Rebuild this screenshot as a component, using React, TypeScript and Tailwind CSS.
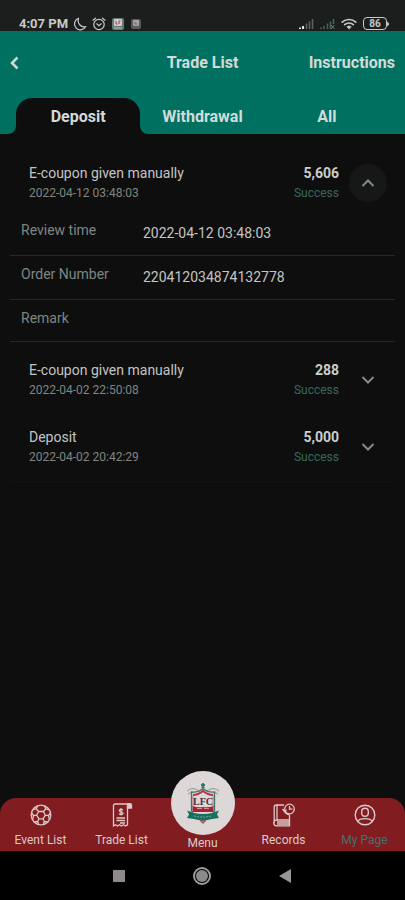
import { useState } from "react";
import type { ReactNode } from "react";

type Trade = {
  id: string;
  title: string;
  time: string;
  amount: string;
  status: string;
  details: { label: string; value: string }[];
};

const trades: Trade[] = [
  {
    id: "coupon-0412",
    title: "E-coupon given manually",
    time: "2022-04-12 03:48:03",
    amount: "5,606",
    status: "Success",
    details: [
      { label: "Review time", value: "2022-04-12 03:48:03" },
      { label: "Order Number", value: "220412034874132778" },
      { label: "Remark", value: "" },
    ],
  },
  {
    id: "coupon-0402",
    title: "E-coupon given manually",
    time: "2022-04-02 22:50:08",
    amount: "288",
    status: "Success",
    details: [],
  },
  {
    id: "deposit-0402",
    title: "Deposit",
    time: "2022-04-02 20:42:29",
    amount: "5,000",
    status: "Success",
    details: [],
  },
];

const tabs = ["Deposit", "Withdrawal", "All"];

function StatusBar() {
  return (
    <div className="flex h-[31px] items-end justify-between bg-[#1c1e1d] pr-4 pl-[19px] text-[#c8cac9]">
      <div className="flex items-center gap-1">
        <span className="mr-px text-[13px] leading-[15px] font-bold">4:07 PM</span>
        {/* do not disturb */}
        <svg width="14" height="14" viewBox="0 0 14 14" fill="none" stroke="currentColor" strokeWidth="1.2">
          <path d="M5.5 1.2A6 6 0 1 0 12.8 9.6C8 10.8 3.9 6.3 5.5 1.2Z" strokeLinejoin="round" />
        </svg>
        {/* alarm */}
        <svg className="ml-px" width="14" height="14" viewBox="0 0 14 14" fill="none" stroke="currentColor" strokeWidth="1.2" strokeLinecap="round">
          <circle cx="7" cy="7.5" r="5.2" />
          <path d="M1 3.2 3.6 1.2M13 3.2 10.4 1.2M4.8 6.8 7 8.6 9.2 6.8" />
        </svg>
        <svg className="ml-px" width="14" height="14" viewBox="0 0 14 14">
          <rect x="1" y="1" width="12" height="12" rx="2" fill="#5f7d72" />
          <rect x="3" y="2" width="8" height="7" rx="1" fill="#d9c5c8" />
          <path d="M5 4v3h1.5M8 7V4h1.5" stroke="#944a55" fill="none" />
          <path d="M3 11h8" stroke="#b4c0ba" />
        </svg>
        <svg className="ml-px" width="12" height="14" viewBox="0 0 12 14">
          <rect x="1" y="2" width="10" height="10" rx="2" fill="#555b59" />
          <rect x="3" y="3" width="6" height="6" rx="1" fill="#aaa0a3" />
          <path d="M5 5v2h2M3 11h6" stroke="#785e67" fill="none" />
        </svg>
      </div>
      <div className="flex items-center gap-[6px] pb-px">
        <svg width="15" height="12" viewBox="0 0 15 12">
          <path d="M1 11V9.500M4 11V8" stroke="#e2e2e2" strokeWidth="2" />
          <path d="M7.500 11V5.500M10.500 11V3.500M13.500 11V1" stroke="#5e6361" strokeWidth="1.500" />
        </svg>
        <svg width="15" height="12" viewBox="0 0 15 12">
          <path d="M1 11V9.500M4 11V8M7.500 11V5.500M10.500 11V3.500M13.500 6V1" stroke="#46665d" strokeWidth="1.500" />
          <path d="m11 7 3.500 4M14.500 7 11 11" stroke="#5d7e75" />
        </svg>
        <svg width="16" height="12" viewBox="0 0 16 12" fill="none" stroke="currentColor" strokeWidth="1.6" strokeLinecap="round">
          <path d="M1.200 4.200a10 10 0 0 1 13.600 0M3.600 6.700a6.500 6.500 0 0 1 8.800 0" />
          <path d="M8 11 5.800 8.800a3.200 3.200 0 0 1 4.400 0Z" fill="currentColor" strokeWidth="0.5" />
        </svg>
        <div className="flex items-center">
          <span className="flex h-[13px] w-6 items-center justify-center rounded border border-[#c8cac9] text-[10px] leading-none font-bold">
            86
          </span>
          <span className="h-1 w-0.5 rounded-r bg-[#c8cac9]" />
        </div>
      </div>
    </div>
  );
}

// Curved foot that joins the active tab to the page below it
function TabFoot({ className }: { className: string }) {
  return (
    <svg className={`absolute bottom-0 ${className}`} width="8" height="8" viewBox="0 0 8 8" fill="#0e0e0e">
      <path d="M8 0v8H0a8 8 0 0 0 8-8Z" />
    </svg>
  );
}

type TradeRowProps = {
  trade: Trade;
  isExpanded: boolean;
  onToggle: () => void;
};

function TradeRow({ trade, isExpanded, onToggle }: TradeRowProps) {
  return (
    <li>
      <div className="flex h-[67px] items-center pr-2 pl-[19px]">
        <div className="min-w-0 flex-1">
          <h2 className="text-[14px] leading-5 text-[#c3c5c4]">{trade.title}</h2>
          <p className="text-[12px] leading-5 text-[#7e8683]">{trade.time}</p>
        </div>
        <div className="text-right">
          <p className="text-[14px] leading-5 font-bold text-[#cbcdcc]">{trade.amount}</p>
          <p className="text-[12px] leading-5 text-[#39695b]">{trade.status}</p>
        </div>
        <button
          type="button"
          onClick={onToggle}
          aria-label={isExpanded ? "Hide details" : "Show details"}
          aria-expanded={isExpanded}
          className={`ml-[10px] flex size-[38px] items-center justify-center rounded-full text-[#858988] ${isExpanded ? "bg-[#161817]" : ""}`}
        >
          <svg width="14" height="10" viewBox="0 0 14 10" fill="none" stroke="currentColor" strokeWidth="2">
            <path d={isExpanded ? "M1.5 8 7 2.5 12.5 8" : "M1.5 2 7 7.5 12.5 2"} />
          </svg>
        </button>
      </div>
      {isExpanded && trade.details.length > 0 && (
        <dl className="-mt-1 mb-1 text-[14px] leading-5">
          {trade.details.map((detail) => (
            <div key={detail.label} className="flex h-[44px] border-b border-[#242726] pl-[11px] last:h-[42px]">
              <dt className="w-[122px] flex-none pt-2 text-[#7e8683]">{detail.label}</dt>
              <dd className="pt-[11px] text-[#c3c5c4]">{detail.value}</dd>
            </div>
          ))}
        </dl>
      )}
    </li>
  );
}

function BallIcon() {
  return (
    <svg width="22" height="22" viewBox="0 0 22 22" fill="none" stroke="currentColor" strokeWidth="1.3" strokeLinejoin="round">
      <circle cx="11" cy="11" r="9.8" />
      <path d="M8.600 7.500h4.800l2 3.700-2.400 3.600H9l-2.400-3.600ZM8.600 7.500 6.300 4.800 7.500 1.900M13.400 7.500l2.300-2.700-1.200-2.900M6.600 11.200l-3.100.3-2-2.500M15.400 11.200l3.100.3 2-2.500M9 14.800l-1.300 2.700 1 3M13 14.800l1.300 2.700-1 3M6.300 4.800 3 5.500M15.700 4.800l3.300.7M3.500 11.500l-.8 4.500M18.500 11.500l.8 4.500M7.700 17.500l-3.500.5M14.300 17.500l3.500.5" />
    </svg>
  );
}

function ReceiptIcon() {
  return (
    <svg width="22" height="24" viewBox="0 0 22 24" fill="none" stroke="currentColor" strokeWidth="1.3">
      <path d="M17 1H4Q2.500 1 2.500 2.500V23l2-1.200 2 1.200 2-1.200 2 1.200 2-1.200 2 1.200 2-1.200V3" />
      <path d="M16.500 5V2.500a2 2 0 0 1 4 0V5Z" fill="currentColor" />
      <path d="M12 7.200c-.5-1-3.800-1.200-3.800.5 0 1.600 3.800.8 3.800 2.600 0 1.700-3.500 1.500-4 .3M10 5v7.500M5.500 15h8.500M5.500 17.500h8.500M9 20h5" />
    </svg>
  );
}

function RecordsIcon() {
  return (
    <svg width="22" height="24" viewBox="0 0 22 24" fill="none" stroke="currentColor" strokeWidth="1.3">
      <path d="M11 2H3.500Q1.200 2 1.200 4v16M4 2v15M16.500 12v5H3.700a2.900 2.900 0 0 0 0 5.800h12.800V17M4 19h12.500M4 21h12.500" />
      <circle cx="16.5" cy="6" r="4.8" />
      <path d="M16.500 3v3.200h3M9.500 6l2 2.500 2-1.500M11.500 8.500q1.500 3 5 3" />
    </svg>
  );
}

function PersonIcon() {
  return (
    <svg width="22" height="22" viewBox="0 0 22 22" fill="none" stroke="currentColor" strokeWidth="1.4">
      <circle cx="11" cy="11" r="9.8" />
      <rect x="7.7" y="4.2" width="6.6" height="8" rx="3.3" />
      <path d="M4 17.500c1.500-3.800 12.500-3.800 14 0" />
    </svg>
  );
}

function ClubCrest() {
  return (
    <svg width="36" height="44" viewBox="0 0 36 44" fill="none">
      <path d="M18 2v4M16 4h4M16.500 6.500h3" stroke="#327b6b" strokeWidth="1.8" />
      <path d="M2 10q5-4 9-1.500Q15 11 18 7q3 4 7 1.500Q29 6 34 10M3 13l4-2M33 13l-4-2" stroke="#8d9593" />
      <path d="M6.500 11q6 1 11.500-3 5.500 4 11.500 3v19q-3 6-11.500 10Q9.500 36 6.500 30Z" fill="#ded6d7" stroke="#3e756a" strokeWidth="1.3" />
      <path d="M8 14q5 0 10-4 5 4 10 4" stroke="#b23a48" strokeWidth="2.2" />
      <path d="M8 14.500v11M28 14.500v11" stroke="#b4777f" />
      <path d="M7.500 25q5 2 10.500 1 5.500 1 10.500-1v6h-21Z" fill="#a7212e" />
      <path d="M12 27.500h5M19 27.500h5" stroke="#cf9298" />
      <text x="18" y="24" textAnchor="middle" fontFamily="Liberation Serif, serif" fontSize="10" fontWeight="bold" fill="#493136">
        LFC
      </text>
      <path d="M2 29.500 9 32q9 2 18 0l7-2.500-2 4 2 3.500-7 1q-9 2.500-18 0l-7-1 2-3.500Z" fill="#17705e" />
      <path d="M9 35q9 2 18 0" stroke="#6ca497" strokeDasharray="2 1" />
      <path d="m15 39 3 3 3-3" stroke="#a65661" strokeWidth="1.5" />
    </svg>
  );
}

type NavItemProps = {
  label: string;
  icon: ReactNode;
  isActive?: boolean;
};

function NavItem({ label, icon, isActive = false }: NavItemProps) {
  return (
    <a href="#" className="flex flex-1 flex-col items-center text-[#dcc9c9]">
      <span className="flex h-[33px] items-center">{icon}</span>
      <span className={`text-[12px] leading-[18px] ${isActive ? "text-[#46706c]" : ""}`}>{label}</span>
    </a>
  );
}

export default function App() {
  const [activeTab, setActiveTab] = useState("Deposit");
  const [expandedId, setExpandedId] = useState<string | null>("coupon-0412");

  return (
    <div className="flex min-h-screen flex-col bg-[#0e0e0e] font-[Roboto,sans-serif]">
      <StatusBar />

      <header className="bg-[#007160] text-[#d3dad8]">
        <div className="grid h-16 grid-cols-[1fr_auto_1fr] items-center px-[10px]">
          <button type="button" aria-label="Back" className="justify-self-start">
            <svg width="9" height="14" viewBox="0 0 9 14" fill="none" stroke="currentColor" strokeWidth="2.5">
              <path d="M7.500 1.500 2 7l5.500 5.500" />
            </svg>
          </button>
          <h1 className="text-[16px] font-bold">Trade List</h1>
          <a href="#" className="justify-self-end text-[16px] font-bold">
            Instructions
          </a>
        </div>

        <nav className="flex px-4 pt-[3px]">
          {tabs.map((tab) => (
            <button
              key={tab}
              type="button"
              onClick={() => setActiveTab(tab)}
              className={`relative h-9 flex-1 pt-0.5 text-[16px] font-bold ${tab === activeTab ? "rounded-t-2xl bg-[#0e0e0e]" : ""}`}
            >
              {tab === activeTab && (
                <>
                  <TabFoot className="-left-2" />
                  <TabFoot className="-right-2 -scale-x-100" />
                </>
              )}
              {tab}
            </button>
          ))}
        </nav>
      </header>

      <main className="flex-1 px-[10px] pt-[15px] pb-10">
        <ul className="border-b border-[#121413] pb-px">
          {trades.map((trade) => (
            <TradeRow
              key={trade.id}
              trade={trade}
              isExpanded={trade.id === expandedId}
              onToggle={() => setExpandedId(trade.id === expandedId ? null : trade.id)}
            />
          ))}
        </ul>
      </main>

      <nav className="flex h-[53px] rounded-t-2xl bg-[#811d20]">
        <NavItem label="Event List" icon={<BallIcon />} />
        <NavItem label="Trade List" icon={<ReceiptIcon />} />
        <a href="#" className="-mt-[27px] flex flex-1 flex-col items-center text-[#dcc9c9]">
          <span className="flex size-16 flex-none items-center justify-center rounded-full bg-[#ddd7d8]">
            <ClubCrest />
          </span>
          <span className="text-[12px] leading-[16px]">Menu</span>
        </a>
        <NavItem label="Records" icon={<RecordsIcon />} />
        <NavItem label="My Page" icon={<PersonIcon />} isActive />
      </nav>

      {/* system buttons */}
      <div className="flex h-[49px] items-center justify-center gap-[68px] bg-black pr-0.5">
        <button type="button" aria-label="Recent apps" className="size-3 bg-[#8d898c]" />
        <button type="button" aria-label="Home" className="flex size-[18px] items-center justify-center rounded-full border-2 border-[#999c9b]">
          <span className="size-3 rounded-full bg-[#8d898c]" />
        </button>
        <button type="button" aria-label="Go back">
          <svg width="12" height="14" viewBox="0 0 12 14" fill="#99959a">
            <path d="M12 0v14L0 7Z" />
          </svg>
        </button>
      </div>
    </div>
  );
}
